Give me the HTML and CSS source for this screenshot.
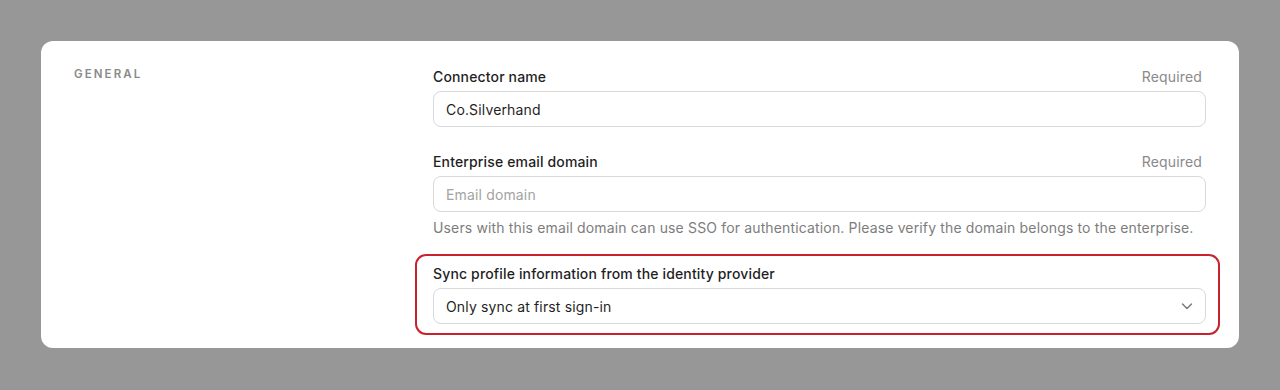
FILE: index.html
```html
<!DOCTYPE html>
<html>
<head>
    <title>SSO connector - General</title>
    <link rel="stylesheet" href="styles.css">
</head>
<body>
    <div class="card">
        <div class="section-title">General</div>
        <div class="form">
            <div class="field">
                <div class="field-head">
                    <label for="connectorName">Connector name</label>
                    <span class="required">Required</span>
                </div>
                <input type="text" id="connectorName" class="input" value="Co.Silverhand">
            </div>
            <div class="field">
                <div class="field-head">
                    <label for="emailDomain">Enterprise email domain</label>
                    <span class="required">Required</span>
                </div>
                <input type="text" id="emailDomain" class="input" placeholder="Email domain">
                <div class="help">Users with this email domain can use SSO for authentication. Please verify the domain belongs to the enterprise.</div>
            </div>
            <div class="field highlight">
                <div class="field-head">
                    <label for="syncProfile">Sync profile information from the identity provider</label>
                </div>
                <div class="select" id="syncProfile">
                    <span>Only sync at first sign-in</span>
                    <svg width="16" height="16" viewBox="0 0 16 16" fill="none" stroke="#7a7a7a" stroke-width="1.5" stroke-linecap="round" stroke-linejoin="round"><path d="M3.5 6l4.5 4.5L12.5 6"/></svg>
                </div>
            </div>
        </div>
    </div>
</body>
</html>
```

FILE: styles.css
```css
body {
    margin: 0;
    padding: 41px 41px;
    background-color: #979797;
    font-family: Inter, "Noto Sans", sans-serif;
    letter-spacing: 0.15px;
    color: #1f1f1f;
}
.card {
    background-color: #fff;
    border-radius: 12px;
    padding: 25px 33px 13px 33px;
    display: flex;
}
.section-title {
    width: 359px;
    flex-shrink: 0;
    font-size: 11.5px;
    font-weight: 600;
    letter-spacing: 2.1px;
    text-transform: uppercase;
    color: #8a8a8a;
    line-height: 16px;
}
.form {
    flex: 1;
    display: flex;
    flex-direction: column;
    gap: 24px;
}
.field-head {
    display: flex;
    justify-content: space-between;
    align-items: center;
    height: 20px;
    margin-bottom: 5px;
    padding-right: 4px;
}
.field-head label {
    font-size: 14px;
    font-weight: 500;
    color: #1f1f1f;
}
.required {
    font-size: 14px;
    color: #8a8a8a;
}
.input, .select {
    box-sizing: border-box;
    width: 100%;
    height: 36px;
    border: 1px solid #d9d9d9;
    border-radius: 8px;
    padding: 0 12px;
    font-family: inherit;
    font-size: 14px;
    letter-spacing: 0.15px;
    color: #1f1f1f;
    background: #fff;
    outline: none;
}
.input::placeholder {
    color: #a3a3a3;
}
.help {
    margin-top: 6px;
    font-size: 14px;
    line-height: 20px;
    color: #7d7d7d;
}
.select {
    display: flex;
    align-items: center;
    justify-content: space-between;
    padding-right: 10px;
}
.highlight {
    margin: -8px -14px 0 -18px;
    padding: 7px 12px 9px 16px;
    border: 2px solid #c8232c;
    border-radius: 11px;
}
```
